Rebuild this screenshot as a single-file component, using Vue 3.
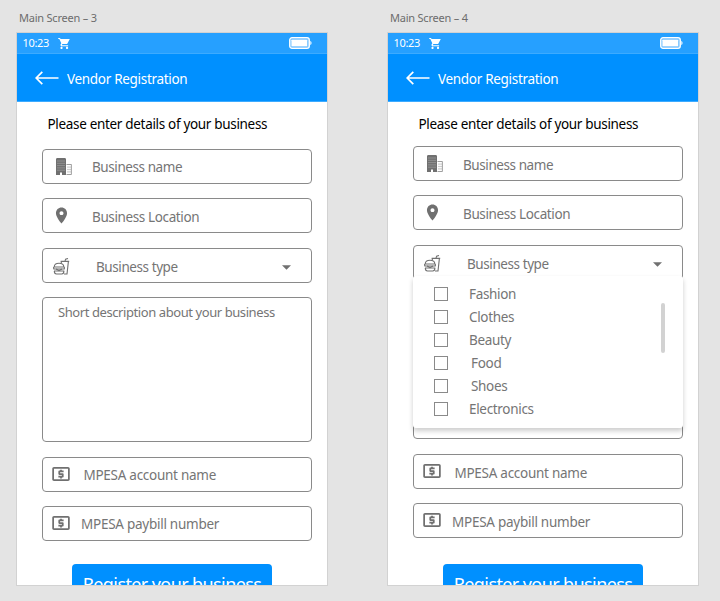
<script setup>
const screens = [
  { id: 3, title: 'Main Screen – 3', open: false },
  { id: 4, title: 'Main Screen – 4', open: true },
]
const options = ['Fashion', 'Clothes', 'Beauty', 'Food', 'Shoes', 'Electronics']
const payments = [
  { key: 'account', label: 'MPESA account name' },
  { key: 'paybill', label: 'MPESA paybill number' },
]
</script>

<template>
  <main class="board">
    <section v-for="s in screens" :key="s.id" class="artboard">
      <h2 class="title">{{ s.title }}</h2>
      <div class="screen" :class="{ open: s.open }">
        <div class="status">
          <span class="time">10:23</span>
          <svg class="cart" viewBox="1 2 21 20">
            <path d="M7 18c-1.100 0-1.990.9-1.990 2S5.900 22 7 22s2-.9 2-2-.9-2-2-2zM1 2v2h2l3.600 7.590-1.350 2.450C4.520 15.370 5.480 17 7 17h12v-2H7.420l1.130-2h7.450c.75 0 1.410-.41 1.750-1.030L22 4H5.210l-.94-2H1zm16 16c-1.100 0-1.990.9-1.990 2s.89 2 1.990 2 2-.9 2-2-.9-2-2-2z" />
          </svg>
          <svg class="battery" viewBox="0 0 23 12">
            <rect x="0.700" y="0.700" width="19.600" height="10.600" rx="2.300" class="shell" />
            <rect x="2.500" y="2.700" width="15.600" height="6.600" rx="0.600" />
            <path d="M21.300 3.800c1.700.7 1.700 3.700 0 4.400z" />
          </svg>
        </div>
        <header class="appbar">
          <svg class="back" viewBox="0 0 24 14">
            <path d="M7.300.8 1.200 7l6.100 6.200M1.200 7H23.500" />
          </svg>
          <span>Vendor Registration</span>
        </header>
        <div class="form">
          <p class="intro">Please enter details of your business</p>

          <div class="field name">
            <svg class="icon" viewBox="0 0 16 17">
              <path d="M0 .8 1 0h8l1 .8V17H6v-2.500H4V17H0z" />
              <path class="holes" d="M2 2.500v11M4 2.500v11M6 2.500v11M8 2.500v11" />
              <path class="outline" d="M10.500 6.500h4.900v10h-4.900" />
              <path class="outline" stroke-dasharray="1.200 1.200" d="M12 8.500v6.500M14 8.500v6.500" />
            </svg>
            <span>Business name</span>
          </div>

          <div class="field location">
            <svg class="icon" viewBox="0 0 24 24">
              <path d="M12 2C8.130 2 5 5.130 5 9c0 5.250 7 13 7 13s7-7.750 7-13c0-3.870-3.130-7-7-7zm0 9.500c-1.380 0-2.500-1.120-2.500-2.500s1.120-2.500 2.500-2.500 2.500 1.120 2.500 2.500-1.120 2.500-2.500 2.500z" />
            </svg>
            <span>Business Location</span>
          </div>

          <div class="field type">
            <svg class="icon" viewBox="0 0 17 17">
              <path class="line" d="M1.200 9C1.300 6.600 3.300 5.300 6 5.300S10.700 6.600 10.900 9zM.7 11h10.700M1 13h10.300M1.300 13c0 2 .9 3 2.200 3h5.200c1.400 0 2.200-1 2.200-3" />
              <path class="line" d="M.9 9c-.6.800-.4 1.600.3 2M11.100 9c.6.800.4 1.600-.2 2M3 11l3 1.600L9 11" />
              <path class="line" d="M7.600 3.400h8.600M8.200 3.400l.2 2M15.400 3.400 14 16h-3M11.900 3.400l.7-2.300L15 .5" />
            </svg>
            <span>Business type</span>
            <svg class="caret" viewBox="0 0 10 5"><path d="M0 0h10L5 5z" /></svg>
            <div v-if="s.open" class="menu">
              <label v-for="o in options" :key="o" class="option" :class="o.toLowerCase()">
                <i class="box"></i><span>{{ o }}</span>
              </label>
              <i class="thumb"></i>
            </div>
          </div>

          <div class="field description"><span>Short description about your business</span></div>

          <div v-for="p in payments" :key="p.key" class="field" :class="p.key">
            <svg class="icon" viewBox="2 4 20 16">
              <path d="M11 17h2v-1h1c.55 0 1-.45 1-1v-3c0-.55-.45-1-1-1h-3v-1h4V8h-2V7h-2v1h-1c-.55 0-1 .45-1 1v3c0 .55.45 1 1 1h3v1H9v2h2v1zm9-13H4c-1.110 0-1.990.89-1.990 2L2 18c0 1.110.89 2 2 2h16c1.110 0 2-.89 2-2V6c0-1.110-.89-2-2-2zm0 14H4V6h16v12z" />
            </svg>
            <span>{{ p.label }}</span>
          </div>

          <button class="submit">Register your business</button>
        </div>
      </div>
    </section>
  </main>
</template>

<style>
body { margin: 0; background: #e4e4e4; }
</style>

<style scoped>
* { box-sizing: border-box; }
svg { display: block; flex: none; }
.board {
  width: 720px;
  height: 601px;
  overflow: hidden;
  display: flex;
  gap: 59px;
  padding: 9px 0 0 16px;
  background: #e4e4e4;
  font-family: "Noto Sans", "Open Sans", sans-serif;
  white-space: nowrap;
}
.artboard { width: 312px; }
.title {
  margin: 0 0 5px 3px;
  height: 18px;
  font-size: 11px;
  line-height: 18px;
  font-weight: 400;
  letter-spacing: -0.22px;
  color: #6c6c6c;
}
.screen {
  height: 554px;
  overflow: hidden;
  background: #fff;
  border: 1px solid #d2d2d2;
}
.status {
  height: 21px;
  display: flex;
  align-items: center;
  padding: 0 15px 0 5.500px;
  background: #26a0ff;
  border-bottom: 1px solid #3dabff;
  color: #fff;
  fill: #fff;
}
.time { width: 35.500px; font-size: 11px; line-height: 20px; letter-spacing: -0.35px; }
.cart { width: 12px; height: 11px; }
.battery { width: 23px; height: 12px; margin-left: auto; }
.shell { fill: #7cc5ff; stroke: #fff; stroke-width: 1.3; }
.appbar {
  height: 48px;
  display: flex;
  align-items: center;
  gap: 8px;
  padding: 2px 0 0 18px;
  background: #0090ff;
  border-bottom: 1px solid #3dabff;
  color: #fff;
  font-size: 13.500px;
  letter-spacing: -0.31px;
}
.back { width: 24px; height: 14px; margin-top: -2px; fill: none; stroke: #fff; stroke-width: 1.7; }
.form { padding: 12px 15px 0 25px; }
.intro {
  margin: 0 0 15px 5.500px;
  height: 20px;
  font-size: 13.500px;
  line-height: 20px;
  letter-spacing: -0.32px;
  color: #000;
}
.open .intro { margin-bottom: 12px; }
.field {
  position: relative;
  height: 35px;
  display: flex;
  align-items: center;
  border: 1px solid #8a8a8a;
  border-radius: 4px;
  color: #757575;
  fill: #707070;
  font-size: 13.500px;
  letter-spacing: -0.42px;
}
.field > span { line-height: 20px; padding-top: 1px; }
.location > span, .type > span, .open .field > span { padding-top: 3px; }
.name { margin-bottom: 14px; padding-left: 13px; gap: 20px; }
.name .icon { width: 16px; height: 17px; }
.holes { fill: none; stroke: #c4c4c4; stroke-width: 0.8; stroke-dasharray: 1 1.300; }
.outline { fill: none; stroke: #888; stroke-width: 0.8; }
.location { margin-bottom: 15px; padding-left: 9px; gap: 22px; letter-spacing: -0.38px; }
.location .icon { width: 19px; height: 19px; margin: -1px -1px 0 0; }
.type { margin-bottom: 14px; padding-left: 10px; gap: 26px; }
.type .icon { width: 17px; height: 17px; margin-top: 1px; }
.line { fill: none; stroke: #707070; stroke-width: 1.1; }
.caret { width: 9px; height: 5px; margin: 4px 20.500px 0 auto; }
.field.description {
  height: 145px;
  margin-bottom: 15px;
  align-items: flex-start;
  padding: 3px 0 0 15px;
  font-size: 13px;
}
.account { margin-bottom: 14px; padding-left: 9px; gap: 13.500px; letter-spacing: -0.27px; }
.paybill { margin-bottom: 23px; padding-left: 9px; gap: 11px; letter-spacing: -0.26px; }
.open .paybill { margin-bottom: 26px; }
.account .icon, .paybill .icon { width: 18px; height: 14px; margin-top: -1px; }
.submit {
  display: block;
  width: 200px;
  height: 40px;
  margin-left: 30px;
  padding: 0;
  border: 0;
  border-radius: 4px;
  background: #0090ff;
  color: #fff;
  font-family: inherit;
  font-size: 18px;
  letter-spacing: -0.6px;
}
.menu {
  position: absolute;
  z-index: 1;
  top: 30px;
  left: -1px;
  width: 270px;
  height: 152px;
  padding-top: 6px;
  background: #fff;
  border-radius: 3px;
  box-shadow: 0 3px 5px rgba(0, 0, 0, 0.2);
  letter-spacing: -0.32px;
}
.option { display: flex; align-items: center; height: 23px; padding-left: 21px; gap: 21px; }
.option > span { line-height: 20px; }
.option.food, .option.shoes { gap: 23px; }
.box { width: 14px; height: 14px; border: 1px solid #8a8a8a; }
.thumb {
  position: absolute;
  top: 27px;
  right: 18px;
  width: 4px;
  height: 50px;
  border-radius: 2px;
  background: #d2d2d2;
}
</style>
